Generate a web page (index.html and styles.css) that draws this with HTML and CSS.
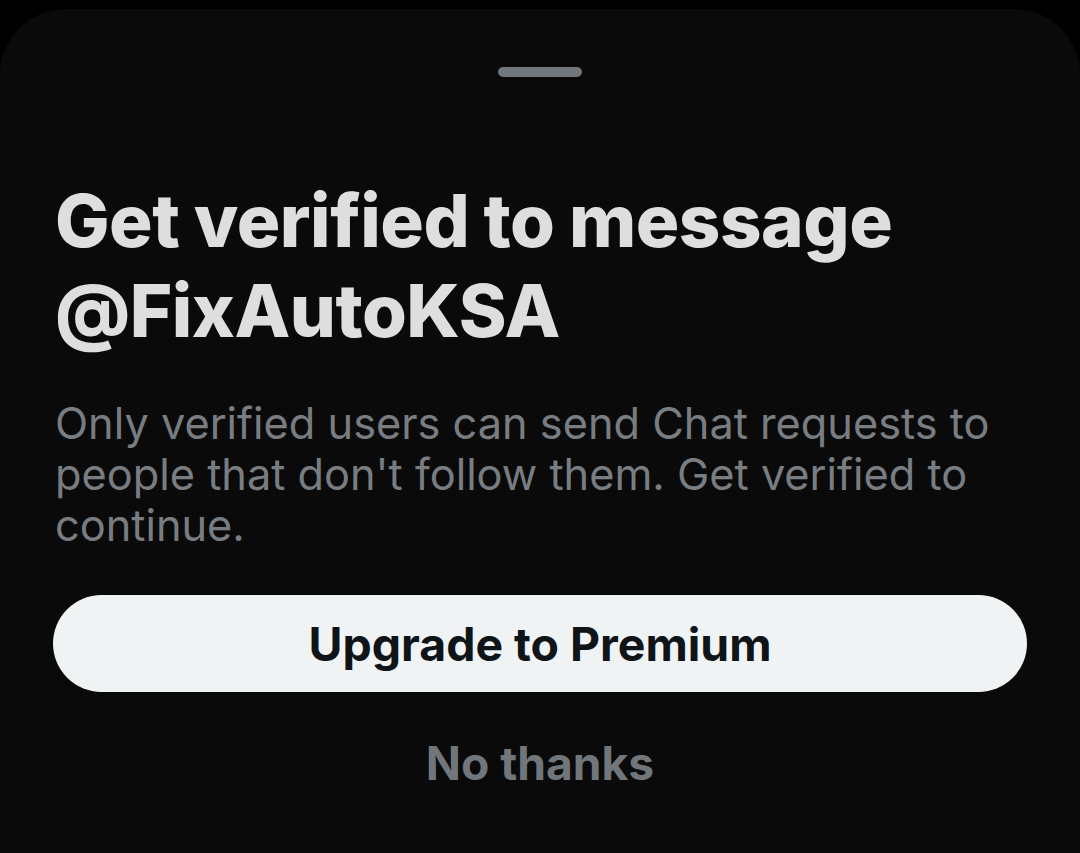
FILE: index.html
```html
<!DOCTYPE html>
<html lang="en">
<head>
<meta charset="utf-8">
<link rel="stylesheet" href="styles.css">
</head>
<body>
<div class="sheet">
  <div class="handle-row"><div class="handle"></div></div>
  <h1 class="title">Get verified to message @FixAutoKSA</h1>
  <p class="desc">Only verified users can send Chat requests to people that don't follow them. Get verified to continue.</p>
  <button class="primary">Upgrade to Premium</button>
  <button class="secondary">No thanks</button>
</div>
</body>
</html>
```
FILE: styles.css
```css
html, body {
  margin: 0;
  padding: 0;
  background: #000;
  width: 1080px;
  height: 853px;
  overflow: hidden;
}
body {
  padding-top: 9px;
  box-sizing: border-box;
  font-family: "Inter", "Noto Sans", sans-serif;
}
.sheet {
  background: #0a0a0a;
  border-radius: 66px 66px 0 0;
  height: 844px;
  padding: 0 53px 0 55px;
  display: flex;
  flex-direction: column;
}
.handle-row {
  display: flex;
  justify-content: center;
  padding-top: 58px;
  margin-left: -2px;
}
.handle {
  width: 84px;
  height: 10px;
  border-radius: 5px;
  background: #71767b;
}
.title {
  margin: 99px 0 0 0;
  font-size: 72.6px;
  line-height: 90px;
  font-weight: 800;
  color: #dedede;
  letter-spacing: -0.5px;
  word-spacing: -1px;
}
.desc {
  margin: 42px 0 0 0;
  font-size: 43.3px;
  line-height: 51px;
  font-weight: 400;
  color: #787d82;
}
.primary {
  margin: 44px 0 0 -2px;
  height: 97px;
  flex-shrink: 0;
  border: none;
  border-radius: 49px;
  background: #eff3f4;
  color: #0f1419;
  font-family: inherit;
  font-size: 46.4px;
  font-weight: 700;
  width: calc(100% + 2px);
}
.secondary {
  margin-top: 41px;
  align-self: center;
  background: none;
  border: none;
  color: #71767b;
  font-family: inherit;
  font-size: 46.2px;
  line-height: 60px;
  font-weight: 700;
  padding: 0;
  margin-left: -2px;
}
```
